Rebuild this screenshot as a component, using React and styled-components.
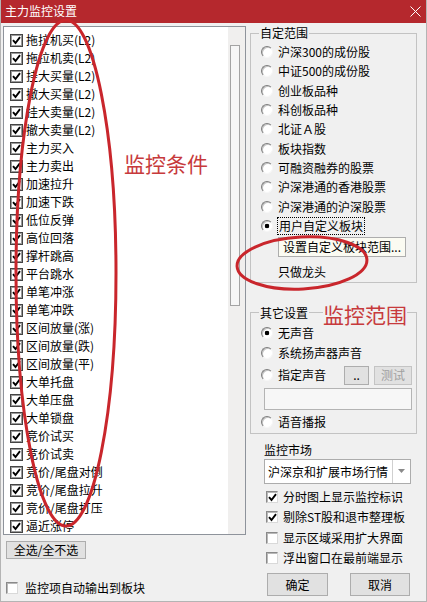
import React from 'react';
import styled, { createGlobalStyle } from 'styled-components';

const Global = createGlobalStyle`
  html, body { margin: 0; padding: 0; background: #f0f0f0; }
  body {
    font-family: "Noto Sans CJK SC", "Microsoft YaHei", sans-serif;
    font-size: 12px;
    color: #000;
  }
`;

const FONT = '"Noto Sans CJK SC", "Microsoft YaHei", sans-serif';

const Window = styled.div`
  position: relative;
  width: 427px;
  height: 602px;
  box-sizing: border-box;
  background: #f0f0f0;
  border: 1px solid #b4b4b4;
  border-top: none;
  display: flex;
  flex-direction: column;
  overflow: hidden;
  font-family: ${FONT};
`;

const TitleBar = styled.div`
  height: 23px;
  flex: none;
  background: #b5282d;
  color: #fff;
  display: flex;
  align-items: center;
  justify-content: space-between;
  padding: 0 4px 1px 4px;
  box-sizing: border-box;
  font-size: 12px;
  line-height: 16px;
`;

const CloseIcon = () => (
  <svg width="11" height="11" viewBox="0 0 11 11" style={{ marginRight: 1 }}>
    <path d="M0.5 0.5 L10.5 10.5 M10.5 0.5 L0.5 10.5" stroke="#fff" strokeWidth="1" fill="none" />
  </svg>
);

const Body = styled.div`
  flex: 1;
  display: flex;
`;

const LeftCol = styled.div`
  width: 245px;
  flex: none;
  display: flex;
  flex-direction: column;
  padding-top: 3px;
  box-sizing: border-box;
`;

const ListBox = styled.div`
  margin-left: 2px;
  width: 243px;
  height: 509px;
  box-sizing: border-box;
  border: 1px solid #8e939b;
  background: #fff;
  display: flex;
`;

const Items = styled.div`
  flex: 1;
  overflow: hidden;
  padding: 4px 0 0 6px;
`;

const ListRow = styled.div`
  height: 18px;
  display: flex;
  align-items: center;
  gap: 3px;
  white-space: nowrap;
  line-height: 16px;
`;

const ListCheck = styled.span`
  width: 13px;
  height: 13px;
  box-sizing: border-box;
  border: 1px solid #444;
  box-shadow: inset 0 0 0 1px #9a9a9a;
  background: #fff;
  display: flex;
  align-items: center;
  justify-content: center;
  flex: none;
`;

const Scrollbar = styled.div`
  width: 17px;
  flex: none;
  background: #f0efee;
  padding: 18px 0 0 2px;
  box-sizing: border-box;
`;

const Thumb = styled.div`
  width: 10px;
  height: 261px;
  box-sizing: border-box;
  border: 1px solid #a3a3a3;
  background: #f6f6f6;
`;

const PushButton = styled.button`
  font-family: ${FONT};
  font-size: 12px;
  line-height: 14px;
  color: ${p => (p.$disabled ? '#a0a0a0' : '#000')};
  background: ${p => (p.$light ? '#fbfbf2' : '#e1e1e1')};
  border: 1px solid ${p => (p.$disabled ? '#c4c4c4' : '#adadad')};
  width: ${p => p.$w}px;
  height: ${p => p.$h}px;
  padding: 0;
  margin: 0;
  display: flex;
  align-items: center;
  justify-content: center;
  flex: none;
  box-sizing: border-box;
`;

const SelectAllWrap = styled.div`
  margin: 6px 0 0 5px;
`;

const BottomRow = styled.div`
  margin: 21px 0 0 5px;
  height: 16px;
  display: flex;
  align-items: center;
  gap: 7px;
  line-height: 16px;
`;

const FlatCheck = styled.span`
  width: 12px;
  height: 12px;
  box-sizing: border-box;
  border: 1px solid;
  border-color: #8a8a8a #d9d9d9 #d9d9d9 #8a8a8a;
  box-shadow: inset 1px 1px 0 #b8b8b8;
  background: #fff;
  display: flex;
  align-items: center;
  justify-content: center;
  flex: none;
`;

const RightCol = styled.div`
  width: 167px;
  margin-left: 4px;
  flex: none;
  display: flex;
  flex-direction: column;
`;

const Group = styled.fieldset`
  margin: ${p => p.$mt}px 0 0 0;
  padding: ${p => p.$pt}px 4px ${p => p.$pb}px 10px;
  border: 1px solid #c3c3c3;
  min-width: 0;
  width: 167px;
  box-sizing: border-box;
`;

const Legend = styled.legend`
  padding: 0 1px;
  margin-left: -2px;
  font-size: 12px;
  line-height: 16px;
`;

const RadioRow = styled.div`
  height: ${p => p.$h}px;
  margin-top: ${p => p.$mt || 0}px;
  display: flex;
  align-items: center;
  gap: 5px;
  white-space: nowrap;
  line-height: 16px;
`;

const Radio = styled.span`
  width: 12px;
  height: 12px;
  border-radius: 50%;
  box-sizing: border-box;
  border: 1px solid;
  border-color: #7d7d7d #f6f6f6 #f6f6f6 #7d7d7d;
  background: ${p =>
    p.$on ? 'radial-gradient(circle, #000 0 2px, #fff 2.6px)' : '#fff'};
  box-shadow: inset 1px 1px 0 #c4c4c4;
  flex: none;
`;

const Focused = styled.span`
  outline: 1px dotted #000;
  outline-offset: 0px;
  padding: 0 1px;
`;

const Spacer = styled.div`
  flex: 1;
`;

const ButtonPair = styled.div`
  display: flex;
  gap: 5px;
`;

const PathInput = styled.div`
  margin: 2px 0 0 3px;
  height: 22px;
  box-sizing: border-box;
  border: 1px solid #b4b4b4;
  background: #f7f7f7;
`;

const Indented = styled.div`
  margin: ${p => p.$mt}px 0 0 ${p => p.$ml}px;
  line-height: 16px;
  height: ${p => p.$h || 16}px;
  display: flex;
  align-items: center;
`;

const Select = styled.div`
  margin: 1px 0 0 14px;
  width: 147px;
  height: 25px;
  box-sizing: border-box;
  border: 1px solid #acacac;
  background: #fff;
  display: flex;
`;

const SelectText = styled.div`
  flex: 1;
  padding-left: 3px;
  display: flex;
  align-items: center;
  white-space: nowrap;
  overflow: hidden;
`;

const SelectArrow = styled.div`
  width: 17px;
  border-left: 1px solid #d0d0d0;
  display: flex;
  align-items: center;
  justify-content: center;
`;

const Options = styled.div`
  margin-top: 3px;
  padding-left: 16px;
`;

const OptRow = styled.div`
  height: 20.3px;
  display: flex;
  align-items: center;
  gap: 5px;
  white-space: nowrap;
  line-height: 16px;
`;

const Actions = styled.div`
  margin: 5px 0 0 17px;
  display: flex;
  gap: 22px;
`;

const Overlay = styled.svg`
  position: absolute;
  left: 0;
  top: 0;
  pointer-events: none;
`;

const Note = styled.span`
  position: absolute;
  left: ${p => p.$x}px;
  top: ${p => p.$y}px;
  font-family: ${FONT};
  font-size: 21px;
  line-height: 24px;
  color: #c73a3c;
  background: ${p => p.$bg || 'transparent'};
  white-space: nowrap;
  pointer-events: none;
`;

const Check = () => (
  <svg width="9" height="9" viewBox="0 0 9 9">
    <path d="M1 4.2 L3.5 7 L8 1.2" stroke="#000" strokeWidth="1.9" fill="none" />
  </svg>
);

const listItems = [
  '拖拉机买(L2)', '拖拉机卖(L2)', '挂大买量(L2)', '撤大买量(L2)', '挂大卖量(L2)',
  '撤大卖量(L2)', '主力买入', '主力卖出', '加速拉升', '加速下跌', '低位反弹',
  '高位回落', '撑杆跳高', '平台跳水', '单笔冲涨', '单笔冲跌', '区间放量(涨)',
  '区间放量(跌)', '区间放量(平)', '大单托盘', '大单压盘', '大单锁盘', '竞价试买',
  '竞价试卖', '竞价/尾盘对倒', '竞价/尾盘拉升', '竞价/尾盘打压', '逼近涨停',
];

const ranges = [
  '沪深300的成份股', '中证500的成份股', '创业板品种', '科创板品种', '北证Ａ股',
  '板块指数', '可融资融券的股票', '沪深港通的香港股票', '沪深港通的沪深股票',
];

const options = [
  ['分时图上显示监控标识', true],
  ['剔除ST股和退市整理板', true],
  ['显示区域采用扩大界面', false],
  ['浮出窗口在最前端显示', false],
];

export default function App() {
  return (
    <>
      <Global />
      <Window>
        <TitleBar>
          <span>主力监控设置</span>
          <CloseIcon />
        </TitleBar>
        <Body>
          <LeftCol>
            <ListBox>
              <Items>
                {listItems.map(t => (
                  <ListRow key={t}>
                    <ListCheck><Check /></ListCheck>
                    <span>{t}</span>
                  </ListRow>
                ))}
              </Items>
              <Scrollbar>
                <Thumb />
              </Scrollbar>
            </ListBox>
            <SelectAllWrap>
              <PushButton $w={80} $h={18}>全选/全不选</PushButton>
            </SelectAllWrap>
            <BottomRow>
              <FlatCheck />
              <span>监控项自动输出到板块</span>
            </BottomRow>
          </LeftCol>

          <RightCol>
            <Group $mt={2} $pt={1.5} $pb={2}>
              <Legend>自定范围</Legend>
              {ranges.map(t => (
                <RadioRow key={t} $h={19.3}>
                  <Radio />
                  <span>{t}</span>
                </RadioRow>
              ))}
              <RadioRow $h={19.3}>
                <Radio $on />
                <Focused>用户自定义板块</Focused>
              </RadioRow>
              <Indented $mt={1.5} $ml={17} $h={20}>
                <PushButton $w={128} $h={20} $light>设置自定义板块范围...</PushButton>
              </Indented>
              <Indented $mt={7} $ml={17}>只做龙头</Indented>
            </Group>

            <Group $mt={22} $pt={2} $pb={1}>
              <Legend>其它设置</Legend>
              <RadioRow $h={20}>
                <Radio $on />
                <span>无声音</span>
              </RadioRow>
              <RadioRow $h={20}>
                <Radio />
                <span>系统扬声器声音</span>
              </RadioRow>
              <RadioRow $h={21} $mt={2}>
                <Radio />
                <span>指定声音</span>
                <Spacer />
                <ButtonPair>
                  <PushButton $w={25} $h={19}>..</PushButton>
                  <PushButton $w={38} $h={19} $disabled>测试</PushButton>
                </ButtonPair>
              </RadioRow>
              <PathInput />
              <RadioRow $h={20} $mt={2}>
                <Radio />
                <span>语音播报</span>
              </RadioRow>
            </Group>

            <Indented $mt={8} $ml={14}>监控市场</Indented>
            <Select>
              <SelectText>沪深京和扩展市场行情</SelectText>
              <SelectArrow>
                <svg width="7" height="4" viewBox="0 0 7 4">
                  <path d="M0 0 L7 0 L3.5 4 Z" fill="#8a8a8a" />
                </svg>
              </SelectArrow>
            </Select>
            <Options>
              {options.map(([t, on]) => (
                <OptRow key={t}>
                  <FlatCheck>{on && <Check />}</FlatCheck>
                  <span>{t}</span>
                </OptRow>
              ))}
            </Options>
            <Actions>
              <PushButton $w={61} $h={23}>确定</PushButton>
              <PushButton $w={60} $h={23}>取消</PushButton>
            </Actions>
          </RightCol>
        </Body>

        <Overlay width="427" height="602" viewBox="0 0 427 602">
          <ellipse cx="65" cy="273" rx="50" ry="253" fill="none" stroke="#c9262c" strokeWidth="3" />
          <ellipse cx="301" cy="263" rx="65" ry="26" fill="none" stroke="#c9262c" strokeWidth="3" transform="rotate(-3 301 263)" />
        </Overlay>
        <Note $x={123} $y={151}>监控条件</Note>
        <Note $x={322} $y={302} $bg="#f0f0f0">监控范围</Note>
      </Window>
    </>
  );
}
